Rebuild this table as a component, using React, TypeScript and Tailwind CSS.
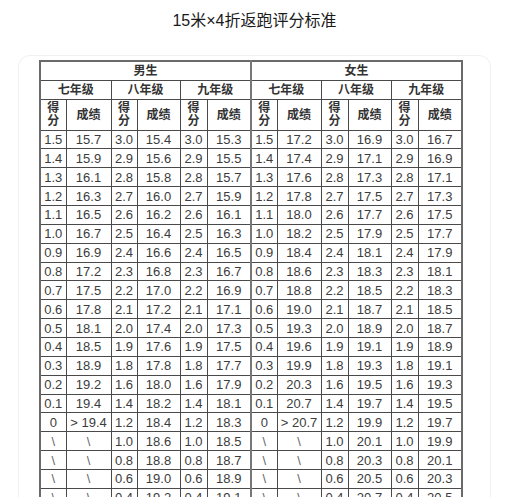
import React from "react";

const rows: string[][] = [
  ["1.5", "15.7", "3.0", "15.4", "3.0", "15.3", "1.5", "17.2", "3.0", "16.9", "3.0", "16.7"],
  ["1.4", "15.9", "2.9", "15.6", "2.9", "15.5", "1.4", "17.4", "2.9", "17.1", "2.9", "16.9"],
  ["1.3", "16.1", "2.8", "15.8", "2.8", "15.7", "1.3", "17.6", "2.8", "17.3", "2.8", "17.1"],
  ["1.2", "16.3", "2.7", "16.0", "2.7", "15.9", "1.2", "17.8", "2.7", "17.5", "2.7", "17.3"],
  ["1.1", "16.5", "2.6", "16.2", "2.6", "16.1", "1.1", "18.0", "2.6", "17.7", "2.6", "17.5"],
  ["1.0", "16.7", "2.5", "16.4", "2.5", "16.3", "1.0", "18.2", "2.5", "17.9", "2.5", "17.7"],
  ["0.9", "16.9", "2.4", "16.6", "2.4", "16.5", "0.9", "18.4", "2.4", "18.1", "2.4", "17.9"],
  ["0.8", "17.2", "2.3", "16.8", "2.3", "16.7", "0.8", "18.6", "2.3", "18.3", "2.3", "18.1"],
  ["0.7", "17.5", "2.2", "17.0", "2.2", "16.9", "0.7", "18.8", "2.2", "18.5", "2.2", "18.3"],
  ["0.6", "17.8", "2.1", "17.2", "2.1", "17.1", "0.6", "19.0", "2.1", "18.7", "2.1", "18.5"],
  ["0.5", "18.1", "2.0", "17.4", "2.0", "17.3", "0.5", "19.3", "2.0", "18.9", "2.0", "18.7"],
  ["0.4", "18.5", "1.9", "17.6", "1.9", "17.5", "0.4", "19.6", "1.9", "19.1", "1.9", "18.9"],
  ["0.3", "18.9", "1.8", "17.8", "1.8", "17.7", "0.3", "19.9", "1.8", "19.3", "1.8", "19.1"],
  ["0.2", "19.2", "1.6", "18.0", "1.6", "17.9", "0.2", "20.3", "1.6", "19.5", "1.6", "19.3"],
  ["0.1", "19.4", "1.4", "18.2", "1.4", "18.1", "0.1", "20.7", "1.4", "19.7", "1.4", "19.5"],
  ["0", "> 19.4", "1.2", "18.4", "1.2", "18.3", "0", "> 20.7", "1.2", "19.9", "1.2", "19.7"],
  ["\\", "\\", "1.0", "18.6", "1.0", "18.5", "\\", "\\", "1.0", "20.1", "1.0", "19.9"],
  ["\\", "\\", "0.8", "18.8", "0.8", "18.7", "\\", "\\", "0.8", "20.3", "0.8", "20.1"],
  ["\\", "\\", "0.6", "19.0", "0.6", "18.9", "\\", "\\", "0.6", "20.5", "0.6", "20.3"],
  ["\\", "\\", "0.4", "19.2", "0.4", "19.1", "\\", "\\", "0.4", "20.7", "0.4", "20.5"],
];

const colWidths = ["w-[26px]", "w-[45px]", "w-[26px]", "w-[43px]", "w-[27px]", "w-[44px]", "w-[26px]", "w-[44px]", "w-[27px]", "w-[43px]", "w-[27px]", "w-[44px]"];

const grades = ["七年级", "八年级", "九年级"];

export default function App() {
  const cell = "border border-[#4a4a4a] p-0 text-center align-middle";
  const mid = "border-l-2 border-l-[#777]";
  return (
    <div className="h-screen overflow-hidden bg-white">
      <div className="ml-[18px] w-[473px]">
        <h1
          className="pt-[9px] text-center text-[16px] leading-[24px] font-normal text-[#1a1a1a]"
          style={{ fontFamily: '"Liberation Sans", "Noto Sans CJK SC", sans-serif' }}
        >
          15米×4折返跑评分标准
        </h1>
        <div className="mt-[22px] h-[600px] rounded-[12px] border border-[#f0f0f0] bg-white pl-[20px] pt-[4px]">
          <table
            className="table-fixed border-collapse border-2 border-[#6a6a6a] text-[#3c3c3c]"
            style={{ fontFamily: '"Liberation Sans", "Noto Sans CJK SC", sans-serif' }}
          >
            <colgroup>
              {colWidths.map((w, i) => (
                <col key={i} className={w} />
              ))}
            </colgroup>
            <tbody>
              <tr className="h-[19px] text-[12px] leading-[14px] font-bold text-[#333]">
                <td colSpan={6} className={cell}>男生</td>
                <td colSpan={6} className={`${cell} ${mid}`}>女生</td>
              </tr>
              <tr className="h-[19px] text-[12px] leading-[14px] font-bold text-[#333]">
                {[0, 1].map((g) =>
                  grades.map((name, i) => (
                    <td key={`${g}-${i}`} colSpan={2} className={`${cell} ${g === 1 && i === 0 ? mid : ""}`}>
                      {name}
                    </td>
                  ))
                )}
              </tr>
              <tr className="h-[31px] text-[12px] font-bold text-[#333]">
                {Array.from({ length: 6 }).map((_, i) => (
                  <React.Fragment key={i}>
                    <td className={`${cell} leading-[13px] ${i === 3 ? mid : ""}`}>
                      得<br />分
                    </td>
                    <td className={`${cell} leading-[14px]`}>成绩</td>
                  </React.Fragment>
                ))}
              </tr>
              {rows.map((r, ri) => (
                <tr key={ri} className="h-[18.87px] text-[13px] leading-[15px]">
                  {r.map((v, ci) => (
                    <td
                      key={ci}
                      className={`${cell} ${ci === 6 ? mid : ""} ${v === "\\" ? "text-[#666]" : ""} whitespace-nowrap`}
                    >
                      {v}
                    </td>
                  ))}
                </tr>
              ))}
            </tbody>
          </table>
        </div>
      </div>
    </div>
  );
}
